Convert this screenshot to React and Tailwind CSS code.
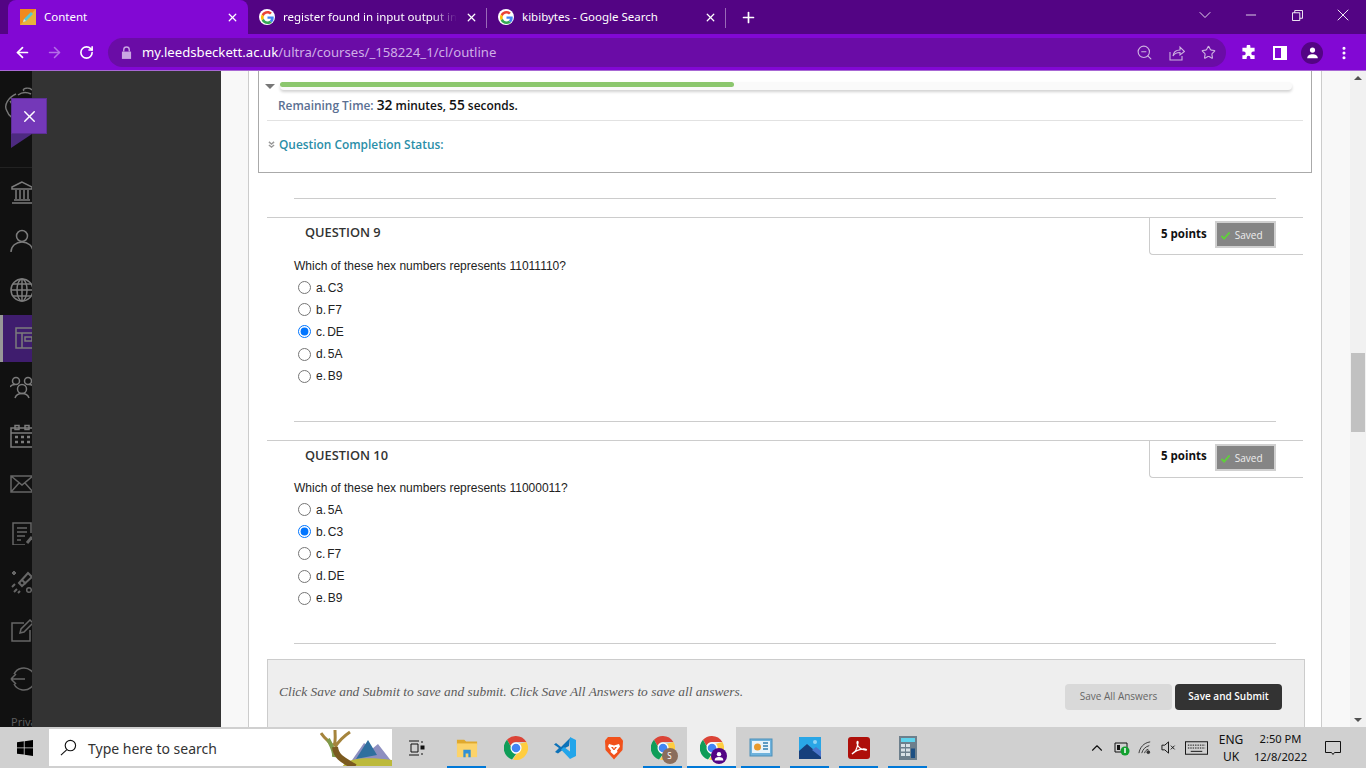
import { ArrowLeft, ArrowRight, RotateCw, ZoomOut, Star, MoreVertical, X, Plus, Minus, ChevronDown, ChevronUp } from "lucide-react";

const questions = [
  { title: "QUESTION 9", textGap: "mt-[3px]", text: "Which of these hex numbers represents 11011110?", options: ["a. C3", "b. F7", "c. DE", "d. 5A", "e. B9"], picked: 2 },
  { title: "QUESTION 10", textGap: "mt-[2px]", text: "Which of these hex numbers represents 11000011?", options: ["a. 5A", "b. C3", "c. F7", "d. DE", "e. B9"], picked: 1 },
];

const GoogleIcon = () => (
  <span className="flex h-4 w-4 shrink-0 items-center justify-center rounded-full bg-white">
    <svg viewBox="0 0 48 48" className="h-[13px] w-[13px]">
      <path fill="#EA4335" d="M24 9.5c3.5 0 6.700 1.200 9.200 3.600l6.900-6.900C35.900 2.400 30.500 0 24 0 14.600 0 6.500 5.400 2.600 13.200l8 6.200C12.500 13.600 17.800 9.500 24 9.500z" />
      <path fill="#4285F4" d="M47 24.500c0-1.600-.1-3.100-.4-4.500H24v9h12.900c-.6 3-2.200 5.500-4.700 7.200l7.700 6c4.500-4.200 7.100-10.300 7.100-17.700z" />
      <path fill="#FBBC05" d="M10.500 28.600c-.5-1.500-.8-3-.8-4.600s.3-3.200.8-4.600l-8-6.200C.9 16.400 0 20.100 0 24s.9 7.600 2.600 10.800l7.900-6.200z" />
      <path fill="#34A853" d="M24 48c6.500 0 11.900-2.100 15.900-5.800l-7.700-6c-2.200 1.500-4.900 2.300-8.200 2.300-6.200 0-11.500-4.100-13.400-9.900l-8 6.200C6.500 42.600 14.600 48 24 48z" />
    </svg>
  </span>
);

const ContentFavicon = () => (
  <svg viewBox="0 0 16 16" className="h-4 w-4 shrink-0">
    <rect width="16" height="16" fill="#f08a1d" />
    <path d="M0 16 16 0v16z" fill="#e8b23a" />
    <path d="M3 13l1-3 7-7 2 2-7 7z" fill="#57c7d8" />
    <path d="M3 13l1-3 2 2z" fill="#f5e3c0" />
  </svg>
);

const Tab = ({ icon, title, active, divider, fade }) => (
  <div className={`relative flex h-full items-center pl-[11px] pr-[9px] ${active ? "w-[240px] rounded-t-lg bg-[#8208d4] pl-[12px]" : "w-[239px]"}`}>
    {icon}
    <span className={`ml-[8px] flex-1 overflow-hidden whitespace-nowrap text-[11.500px] text-white ${fade ? "mask-r-from-85%" : ""}`}>{title}</span>
    <X size={13} strokeWidth={2.4} className="ml-2 shrink-0 text-white" />
    {divider && <span className="absolute right-0 top-[8px] h-[20px] w-px bg-[#9a6ab8]" />}
  </div>
);

const BrowserChrome = () => (
  <div className="font-['Noto_Sans',sans-serif]">
    <div className="flex h-[34px] items-end bg-[#530484] pl-[8px]">
      <Tab icon={<ContentFavicon />} title="Content" active />
      <Tab icon={<GoogleIcon />} title="register found in input output int" divider fade />
      <Tab icon={<GoogleIcon />} title="kibibytes - Google Search" divider />
      <Plus size={17} strokeWidth={2.4} className="mb-[8px] ml-[14px] text-white" />
      <div className="mb-[9px] ml-auto flex items-center text-white">
        <span className="flex w-[46px] justify-center"><ChevronDown size={20} strokeWidth={1} /></span>
        <span className="flex w-[46px] justify-center"><Minus size={16} strokeWidth={1.200} /></span>
        <span className="flex w-[46px] justify-center">
          <svg viewBox="0 0 12 12" className="h-[11px] w-[11px]" fill="none" stroke="currentColor"><path d="M.5 3h8v8.500h-8zM3 3V.5h8.500V9H8.500" /></svg>
        </span>
        <span className="flex w-[46px] justify-center"><X size={20} strokeWidth={1.100} /></span>
      </div>
    </div>
    <div className="flex h-[37px] items-center border-b border-[#a868d4] bg-[#8208d4] pt-[1px]">
      <div className="flex w-[108px] items-center pl-[14px] text-white">
        <ArrowLeft size={17} strokeWidth={2.4} />
        <ArrowRight size={17} strokeWidth={2.2} className="ml-[15px] text-[#b56ee6]" />
        <RotateCw size={15} strokeWidth={2.6} className="ml-[16px]" />
      </div>
      <div className="flex h-[29px] w-[1118px] items-center rounded-full bg-[#6a0ca6] pl-[13px] pr-[10px]">
        <svg viewBox="0 0 12 14" className="h-[13px] w-[11px]" fill="#c9a6e2"><path d="M1 6h10v8H1z" /><path d="M3 6V4a3 3 0 0 1 6 0v2" fill="none" stroke="#c9a6e2" strokeWidth="1.500" /></svg>
        <span className="ml-[10px] text-[13.150px] text-white">my.leedsbeckett.ac.uk<span className="text-[#cfaee6]">/ultra/courses/_158224_1/cl/outline</span></span>
        <div className="ml-auto flex items-center gap-[16px] text-[#cdb2e0]">
          <ZoomOut size={17} strokeWidth={1.600} />
          <svg viewBox="0 0 16 16" className="h-[16px] w-[16px]" fill="none" stroke="currentColor" strokeWidth="1.100"><path d="M1 7v8h12v-4M4 11c.5-4 3.500-6 7-6V2l4.500 4.500L11 10V7.500c-3 0-5.500 1-7 3.500z" /></svg>
          <Star size={15} strokeWidth={1.800} />
        </div>
      </div>
      <div className="flex flex-1 items-center text-white">
        <svg viewBox="0 0 16 16" className="ml-[15px] h-[15px] w-[15px]" fill="currentColor"><path d="M6 1.500a2 2 0 0 1 4 0V3h4.500v4H13a2 2 0 0 0 0 4h1.500v4H10v-1.500a2 2 0 0 0-4 0V15H1.500v-4H3a2 2 0 0 0 0-4H1.500V3H6z" /></svg>
        <span className="ml-[17px] h-[14px] w-[14px] border-[2px] border-r-[6px] border-white" />
        <span className="ml-[14px] flex h-[22px] w-[22px] items-center justify-center rounded-full bg-[#530484]">
          <svg viewBox="0 0 16 16" className="h-[13px] w-[13px]" fill="currentColor"><circle cx="8" cy="5" r="3.200" /><path d="M1.500 15c0-3.500 3-5 6.500-5s6.500 1.500 6.500 5z" /></svg>
        </span>
        <MoreVertical size={16} strokeWidth={2.6} className="ml-[13px]" />
      </div>
    </div>
  </div>
);

const railIcons = [
  <g key="bank"><path d="M12 2 2 7v2h20V7zM4 20h16M2 23h20" /><path d="M6 10v9M10 10v9M14 10v9M18 10v9" /></g>,
  <g key="user"><circle cx="12" cy="7" r="5.500" /><path d="M1 23c0-6 5-10 11-10s11 4 11 10" /></g>,
  <g key="globe"><circle cx="12" cy="12" r="11" /><ellipse cx="12" cy="12" rx="5" ry="11" /><path d="M1 12h22M3 6h18M3 18h18M12 1v22" /></g>,
  <g key="course"><path d="M3 2h22v20H3zM3 7h22M9 7v15" /><rect x="12" y="11" width="7" height="4" /></g>,
  <g key="group"><circle cx="6" cy="6" r="3.500" /><circle cx="18" cy="6" r="3.500" /><circle cx="12" cy="14" r="4.500" /><path d="M0 12c1-2 3-2.500 5-2.500M24 12c-1-2-3-2.500-5-2.500M5 23c1-3 4-4.500 7-4.500s6 1.500 7 4.500" /></g>,
  <g key="calendar"><path d="M1 4h22v19H1zM1 9h22" /><rect x="5" y="1.500" width="4" height="4" /><rect x="15" y="1.500" width="4" height="4" /><path strokeWidth="2.400" d="M5 13h3M11 13h3M17 13h3M5 18h3M11 18h3M17 18h3" /></g>,
  <g key="mail"><path d="M1 4h22v16H1zM1 4l11 9 11-9M1 20l8-9M23 20l-8-9" /></g>,
  <g key="grades"><path d="M21 12V2H3v22h12M7 7h10M7 11h10M7 15h8M7 19h4" /><path strokeWidth="3" d="m17 22 5-6" /></g>,
  <g key="tools"><path strokeWidth="2" d="m9 13 9-10 4 4-10 9zM12 10l4 4" /><path strokeWidth="2" d="M4 1v4M2 3h4M4 22l3-3M2 17l3-3M8 23l2-2" /><circle cx="19" cy="20" r="2.300" /></g>,
  <g key="note"><path d="M14 4H2v18h18V11M10 14l1-4L20 1l3 3-9 9z" /></g>,
  <g key="exit"><path d="M4 7a11 11 0 1 1 0 10M1 12h14M1 12l5-5M1 12l5 5" /></g>,
];

const Rail = () => (
  <div className="relative flex w-[32px] shrink-0 flex-col overflow-hidden bg-[#111111] font-['Noto_Sans',sans-serif]">
    <div className="h-[97px] shrink-0 border-b border-[#222]">
      <svg viewBox="0 0 28 44" className="ml-[4px] mt-[16px] h-[44px] w-[28px]" fill="none" stroke="#777" strokeWidth="1.400"><path d="M20 4c-3-3 6-4 8-1M14 8c4-3 9-3 13-1M3 24c-4-6 2-14 9-17M3 24c2 6 7 8 12 8M6 14c2 2 3 5 3 8" /></svg>
    </div>
    {railIcons.map((icon, i) => (
      <div key={i} className={`relative flex h-[48.700px] shrink-0 items-center pl-[10px] ${i === 3 ? "before:absolute before:inset-y-[1px] before:left-0 before:w-[3px] before:bg-[#989898] after:absolute after:inset-y-[1px] after:left-[3px] after:right-0 after:bg-[#3f1d6e]" : ""}`}>
        <svg viewBox="0 0 24 24" className={`relative z-10 h-[24px] w-[24px] shrink-0 ${i === 3 ? "ml-[3px]" : ""}`} fill="none" stroke={i < 6 ? "#7c7c7c" : "#666"} strokeWidth="1.500">{icon}</svg>
      </div>
    ))}
    <span className="mt-[10px] pl-[11px] text-[11px] text-[#5c5c5c]">Privacy</span>
  </div>
);

const Radio = ({ checked }) => (
  <input type="radio" checked={checked} readOnly className="m-0 h-[13px] w-[13px] shrink-0" />
);

const Question = ({ q }) => (
  <div>
    <div className="ml-[18px] mt-[18px] flex h-[38px] w-[1036px] justify-between border-t border-[#ccc]">
      <div className="pl-[38px] pt-[5px] font-['Open_Sans',sans-serif] text-[12.800px] font-semibold text-[#333]">{q.title}</div>
      <div className="flex w-[154px] items-start rounded-bl border-b border-l border-[#ccc] pl-[11px] pt-[3px] font-['Open_Sans',sans-serif]">
        <span className="mt-[3.500px] text-[11.500px] font-bold text-[#111]">5 points</span>
        <span className="ml-[8px] flex h-[27px] w-[61px] items-center border-2 border-[#d0d0d0] bg-[#858585] pl-[3px] pt-[2px] text-[10px] text-[#eee]">
          <svg viewBox="0 0 12 12" className="mr-[4px] h-[11px] w-[11px]" fill="none" stroke="#5fd03a" strokeWidth="2"><path d="m1.500 6.500 3 3 6-7" /></svg>
          Saved
        </span>
      </div>
    </div>
    <div className={`ml-[45px] h-[16px] font-['Liberation_Sans',sans-serif] text-[12px] leading-[16px] text-[#222] ${q.textGap}`}>{q.text}</div>
    <div className="ml-[49px] mt-[2.500px] font-['Liberation_Sans',sans-serif] text-[12px] text-[#222]">
      {q.options.map((o, i) => (
        <label key={o} className="flex h-[22.200px] items-center">
          <Radio checked={i === q.picked} />
          <span className="ml-[5px] [word-spacing:-1.500px]">{o}</span>
        </label>
      ))}
    </div>
    <div className="ml-[45px] mt-[33.500px] h-px w-[982px] bg-[#ccc]" />
  </div>
);

const Page = () => (
  <div className="flex min-w-0 flex-1 overflow-hidden bg-[#f8f8f8]">
    <div className="ml-[27px] w-[1074px] shrink-0 border-x border-[#ccc] bg-white">
      <div className="ml-[9px] h-[102px] w-[1054px] border border-t-0 border-[#aaa] font-['Open_Sans',sans-serif]">
        <div className="flex items-center pl-[6px] pt-[11px]">
          <span className="h-0 w-0 border-x-[5px] border-t-[5px] border-x-transparent border-t-[#777]" />
          <div className="ml-[5px] h-[8px] w-[1012px] rounded-full bg-[#fafafa] shadow-[0_2px_3px_rgba(0,0,0,0.18)]">
            <div className="h-[5px] w-[454px] rounded-full bg-[#8cc76e]" />
          </div>
        </div>
        <div className="ml-[8px] mt-[5px] h-[26px] w-[1036px] border-b border-[#e2e2e2] pl-[11px] text-[11.900px] font-semibold leading-[20px] text-[#111]">
          <span className="text-[#5a6f92]">Remaining Time:</span> <span className="text-[13.800px]">32</span> minutes, <span className="text-[13.800px]">55</span> seconds.
        </div>
        <div className="mt-[15px] flex items-center pl-[9px] text-[11.900px] font-semibold text-[#2a8ea8]">
          <svg viewBox="0 0 8 8" className="h-[7px] w-[7px]" fill="none" stroke="#999" strokeWidth="1.500"><path d="m1 1 3 2.500L7 1M1 4.500 4 7l3-2.500" /></svg>
          <span className="ml-[4px]">Question Completion Status:</span>
        </div>
      </div>
      <div className="ml-[45px] mt-[25px] h-px w-[982px] bg-[#ccc]" />
      {questions.map((q) => <Question key={q.title} q={q} />)}
      <div className="ml-[18px] mt-[15px] flex h-[80px] w-[1038px] items-start justify-between border border-[#ccc] bg-[#eeeeee] pl-[11px] pr-[22px] pt-[24px]">
        <span className="-mt-[2px] font-['Liberation_Serif',serif] text-[13.400px] italic text-[#5a5a5a]">Click Save and Submit to save and submit. Click Save All Answers to save all answers.</span>
        <div className="flex gap-[3px] font-['Open_Sans',sans-serif] text-[10px]">
          <span className="flex h-[26px] w-[107px] items-center justify-center rounded-sm bg-[#d9d9d9] text-[#666]">Save All Answers</span>
          <span className="flex h-[26px] w-[107px] items-center justify-center rounded-sm bg-[#333] font-semibold text-white">Save and Submit</span>
        </div>
      </div>
    </div>
  </div>
);

const Scrollbar = () => (
  <div className="flex w-[16px] shrink-0 flex-col items-center bg-[#f1f1f1]">
    <span className="mt-[5px] h-0 w-0 border-x-[4px] border-b-[4px] border-x-transparent border-b-[#505050]" />
    <div className="mt-[273px] h-[79px] w-[14px] bg-[#c1c1c1]" />
    <span className="mt-auto mb-[5px] h-0 w-0 border-x-[4px] border-t-[4px] border-x-transparent border-t-[#505050]" />
  </div>
);

const ChromeLogo = ({ children }) => (
  <span className="relative h-[24px] w-[24px]">
    <svg viewBox="0 0 24 24" className="h-[24px] w-[24px]">
      <path fill="#db4437" d="M12 0a12 12 0 0 1 10.400 6H12a6 6 0 0 0-5.600 3.800L3 3.800A12 12 0 0 1 12 0z" />
      <path fill="#0f9d58" d="M3 3.800l5.200 9.200a4 4 0 0 0 3.800 5L8 23.400A12 12 0 0 1 3 3.800z" />
      <path fill="#ffcd40" d="M22.400 6A12 12 0 0 1 9 23.600L14.500 15A4 4 0 0 0 16 8h-1z" />
      <circle cx="12" cy="12" r="5.500" fill="#fff" />
      <circle cx="12" cy="12" r="4.300" fill="#4285f4" />
    </svg>
    {children}
  </span>
);

const taskIcons = [
  {
    on: true,
    icon: (
      <svg viewBox="0 0 24 24" className="h-[22px] w-[22px]">
        <path fill="#e0a92e" d="M1 3h8l2 2h12v4H1z" />
        <path fill="#fcd36a" d="M1 7h22v15H1z" />
        <path fill="#2f8fd6" d="M8 14h8v8h-2.500v-4h-3v4H8z" />
      </svg>
    ),
  },
  { icon: <ChromeLogo /> },
  {
    icon: (
      <svg viewBox="0 0 24 24" className="h-[24px] w-[24px]">
        <path fill="#0d72b8" d="M1 8.500 3 7l5 4 9-9-1 8-4 2-7 5.500-3-1.500L6 12z" />
        <path fill="#22a5ea" d="M17 1l6 3v16l-6 3-9-9.500 3-2.500 6 4.500z" />
      </svg>
    ),
  },
  {
    icon: (
      <svg viewBox="0 0 24 24" className="h-[24px] w-[24px]">
        <path fill="#f1511b" d="M6 1h12l3 3.500-.5 9.500L12 23.500 3.500 14 3 4.500z" />
        <path fill="#fff" d="M7 8l5 1.500L17 8l1 2.500-3 4 .5 1.500L12 19l-3.500-3 .5-1.500-3-4z" />
        <path fill="#f1511b" d="M9 11h2l1 2 1-2h2l-2.500 3h-1z" />
      </svg>
    ),
  },
  {
    on: true,
    icon: (
      <ChromeLogo>
        <span className="absolute -bottom-[4px] -right-[3px] flex h-[16px] w-[16px] items-center justify-center rounded-full bg-[#8a6d5c] text-[8px] text-white">S</span>
      </ChromeLogo>
    ),
  },
  {
    on: true,
    active: true,
    icon: (
      <ChromeLogo>
        <span className="absolute -bottom-[4px] -right-[3px] flex h-[16px] w-[16px] items-center justify-center rounded-full bg-[#530484]">
          <svg viewBox="0 0 16 16" className="h-[10px] w-[10px]" fill="#fff"><circle cx="8" cy="5" r="3.500" /><path d="M1 15c0-4 3-5.500 7-5.500s7 1.500 7 5.500z" /></svg>
        </span>
      </ChromeLogo>
    ),
  },
  {
    on: true,
    icon: (
      <svg viewBox="0 0 24 24" className="h-[24px] w-[24px]">
        <rect x="1" y="3" width="22" height="17" fill="#6fb3dd" stroke="#4d8fb8" />
        <rect x="3" y="5" width="18" height="12" fill="#e8f4fb" />
        <circle cx="8.500" cy="11" r="3.500" fill="#e89a2d" />
        <path d="M14 7h5M14 10h5M14 13h5" stroke="#2f7db0" strokeWidth="1.400" />
      </svg>
    ),
  },
  {
    on: true,
    icon: (
      <svg viewBox="0 0 24 24" className="h-[24px] w-[24px]">
        <rect x="1" y="1" width="22" height="22" fill="#29a6e6" />
        <path fill="#163f7c" d="M1 23V15l8-7 14 12v3z" />
        <path fill="#4c76cc" d="m14 14 4-3 5 4v6z" />
        <circle cx="17" cy="6" r="2" fill="#8fd5f5" />
      </svg>
    ),
  },
  {
    on: true,
    icon: (
      <svg viewBox="0 0 24 24" className="h-[24px] w-[24px]">
        <rect x="1" y="1" width="22" height="22" rx="3" fill="#ae0f0a" />
        <path fill="none" stroke="#fff" strokeWidth="1.300" d="M5 18c3-1 5-5 6-11 .3-2-1-2-1 0 .5 4 4 7 9 7 1.500 0-.5-1.500-3-1-4 .5-8 2-11 5z" />
      </svg>
    ),
  },
  {
    on: true,
    icon: (
      <svg viewBox="0 0 24 24" className="h-[26px] w-[24px]">
        <rect x="3" y="0" width="18" height="24" fill="#6d7f8c" />
        <rect x="5" y="2" width="14" height="4" fill="#5fd3ec" />
        <path fill="#d8e0e5" d="M5 8h4v3H5zM10 8h4v3h-4zM5 12.500h4v3H5zM10 12.500h4v3h-4zM5 17h4v3H5zM10 17h4v3h-4z" />
        <path fill="#1c4f82" d="M15 12.500h4V22h-4z" />
      </svg>
    ),
  },
];

const Taskbar = () => (
  <div className="flex h-[41px] shrink-0 items-stretch bg-[#d0d0d0] font-['Noto_Sans',sans-serif] text-[#111]">
    <div className="flex w-[49px] items-center justify-center">
      <svg viewBox="0 0 16 16" className="h-[16px] w-[16px]" fill="#000"><path d="M0 2.200 6.800 1.300v6.200H0zM7.600 1.200 16 0v7.500H7.600zM0 8.300h6.800v6.300L0 13.700zM7.600 8.300H16V16l-8.400-1.200z" /></svg>
    </div>
    <div className="my-[2px] flex w-[343px] items-center overflow-hidden bg-white pl-[11px]">
      <svg viewBox="0 0 18 18" className="h-[17px] w-[17px]" fill="none" stroke="#111" strokeWidth="1.200"><circle cx="11" cy="7" r="5.500" /><path d="M7 11.500 1 17" /></svg>
      <span className="ml-[11px] pt-[1px] text-[14px] text-[#333]">Type here to search</span>
      <svg viewBox="0 0 72 38" className="ml-auto h-[38px] w-[72px] shrink-0">
        <path fill="#8d8fc0" d="M30 34 44 14l8 6 6-5 14 18z" />
        <path fill="#2f6f9e" d="m36 30 12-19 9 15z" />
        <path fill="#bcb93b" d="M22 38c6-10 26-10 50-7v7z" />
        <path fill="none" stroke="#a5843c" strokeWidth="3" d="M1 4c4 6 8 8 11 12M15 1c0 7 1 11-1 16M30 3c-6 4-11 9-15 15" />
        <path fill="none" stroke="#7f9a4a" strokeWidth="4" d="M8 10c3 6 7 12 6 18" />
        <path fill="none" stroke="#7b5a1f" strokeWidth="6" d="M15 18c1 10 8 13 20 20" />
      </svg>
    </div>
    <div className="flex w-[50px] items-center justify-center">
      <svg viewBox="0 0 16 16" className="h-[16px] w-[16px]" fill="none" stroke="#111"><path d="M0 1h10M0 15h10M2 4h7v8H2zM13 1v2M13 13v2" /><rect x="12" y="6" width="3" height="3" fill="#111" /></svg>
    </div>
    {taskIcons.map((t, i) => (
      <div key={i} className={`relative flex w-[49px] items-center justify-center ${t.active ? "bg-[#eeeeee]" : ""}`}>
        {t.icon}
        {t.on && <span className={`absolute bottom-0 h-[2px] bg-[#0078d7] ${t.active ? "inset-x-0" : "inset-x-[5px]"}`} />}
      </div>
    ))}
    <div className="ml-auto flex items-center">
      <span className="flex w-[24px] justify-center"><ChevronUp size={18} strokeWidth={1.500} /></span>
      <span className="flex w-[25px] justify-center">
        <svg viewBox="0 0 16 16" className="h-[16px] w-[16px]"><path d="M1 3h12v9H1z" fill="none" stroke="#111" /><rect x="3" y="5" width="3" height="5" fill="#111" /><circle cx="11" cy="11" r="4.500" fill="#12a02f" /><path d="M11 8v5" stroke="#fff" strokeWidth="1.500" /></svg>
      </span>
      <span className="flex w-[23px] justify-center">
        <svg viewBox="0 0 16 16" className="h-[15px] w-[15px]" fill="none" stroke="#333"><path d="M1 14C2 8 6 3 13 2M4 14c1-4 4-7 8-8M7 14c.5-2 2-4 4-4" /><circle cx="11" cy="13" r="1.500" fill="#333" /></svg>
      </span>
      <span className="flex w-[22px] justify-center">
        <svg viewBox="0 0 16 16" className="h-[15px] w-[15px]" fill="none" stroke="#111"><path d="M1 5.500h3L8 2v12l-4-3.500H1zM10.500 6l4 4M14.500 6l-4 4" /></svg>
      </span>
      <span className="flex w-[34px] justify-center">
        <svg viewBox="0 0 24 14" className="h-[14px] w-[23px]" fill="none" stroke="#111"><rect x=".5" y=".5" width="23" height="13" /><path strokeDasharray="1.500 1" d="M3 4h18M3 7h18" /><path d="M6 10.500h12" /></svg>
      </span>
      <span className="flex w-[36px] flex-col items-center text-[12px] leading-[17px]"><span>ENG</span><span>UK</span></span>
      <span className="flex w-[60px] flex-col items-center pl-[3px] text-[11.200px] leading-[18px]"><span>2:50 PM</span><span>12/8/2022</span></span>
      <span className="flex w-[48px] justify-center">
        <svg viewBox="0 0 16 16" className="h-[16px] w-[16px]" fill="none" stroke="#111"><path d="M.5 1.500h15v11H9.500L8 14.500 6.500 12.500h-6z" /></svg>
      </span>
      <span className="w-[9px]" />
    </div>
  </div>
);

export default function App() {
  return (
    <div className="flex h-screen w-full flex-col overflow-hidden">
      <BrowserChrome />
      <div className="relative flex min-h-0 flex-1">
        <Rail />
        <div className="w-[189px] shrink-0 bg-[#333333]" />
        <Page />
        <Scrollbar />
        {/* close button sits over the rail */}
        <div className="absolute left-[11px] top-[27px] flex h-[36px] w-[36px] items-center justify-center border border-[#5d2f96] bg-[#7438b8] text-white">
          <X size={19} strokeWidth={1.800} />
        </div>
        <div className="absolute left-[11px] top-[63px] h-0 w-0 border-b-[14px] border-l-[21px] border-b-transparent border-l-[#4d2a80]" />
      </div>
      <Taskbar />
    </div>
  );
}
